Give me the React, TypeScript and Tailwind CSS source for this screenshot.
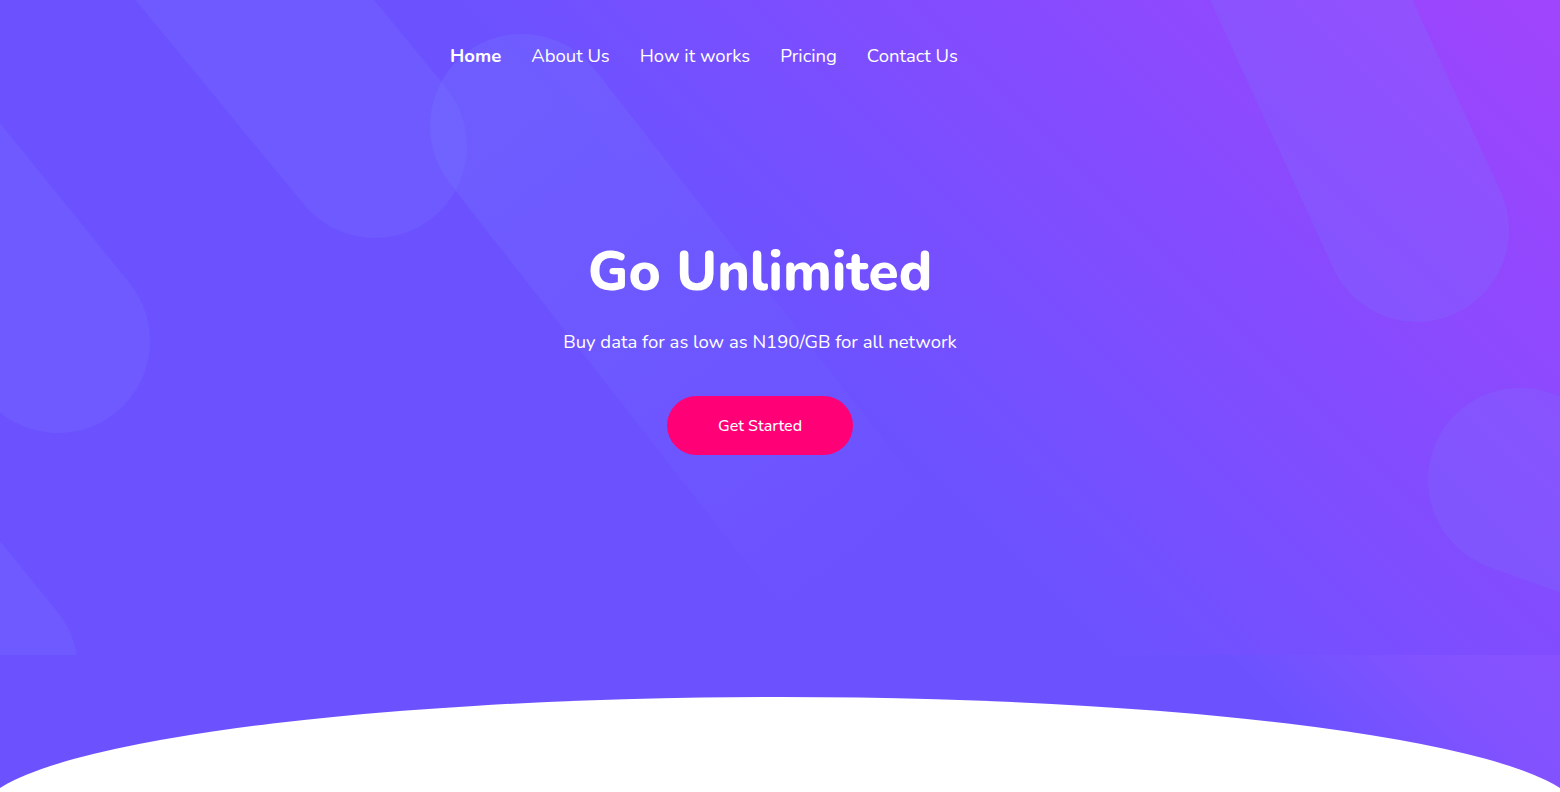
const navLinks = ["Home", "About Us", "How it works", "Pricing", "Contact Us"];

// decorative capsules: [x1, y1, x2, y2] centre line, drawn with a round cap
const capsules = [
  [184, -86, 375, 146],
  [-194, 30, 58, 341],
  [1250, -133, 1417, 230],
  [1520, 480, 1802, 583],
  [-203, 437, -14, 670],
];

const Shapes = () => (
  <svg className="absolute inset-0 h-full w-full" viewBox="0 0 1560 655" preserveAspectRatio="none">
    <defs>
      <linearGradient id="fade" gradientUnits="userSpaceOnUse" x1="522" y1="126" x2="860" y2="560">
        <stop offset="0" stopColor="#767dff" stopOpacity="0.24" />
        <stop offset="0.55" stopColor="#767dff" stopOpacity="0.1" />
        <stop offset="1" stopColor="#767dff" stopOpacity="0" />
      </linearGradient>
    </defs>
    {capsules.map(([x1, y1, x2, y2], i) => (
      <line
        key={i}
        x1={x1}
        y1={y1}
        x2={x2}
        y2={y2}
        stroke="#767dff"
        strokeOpacity={0.2}
        strokeWidth={184}
        strokeLinecap="round"
      />
    ))}
    <line x1={522} y1={126} x2={900} y2={610} stroke="url(#fade)" strokeWidth={184} strokeLinecap="round" />
  </svg>
);

export default function App() {
  return (
    <section
      className="relative h-[792px] overflow-hidden bg-[linear-gradient(45deg,#6c52ff_58%,#8252ff_66%,#a24cff_100%)] text-white"
      style={{ fontFamily: "Nunito, Lato, 'Noto Sans', sans-serif" }}
    >
      <div className="relative h-[655px] overflow-hidden bg-[linear-gradient(45deg,#6c52ff_50%,#a044fd_100%)]">
        <Shapes />

        <nav className="relative flex gap-[30px] pl-[450px] pt-[42px] text-[18.5px] leading-[28px]">
          {navLinks.map((link, i) => (
            <a key={link} href="#" className={i === 0 ? "font-bold" : "font-normal"}>
              {link}
            </a>
          ))}
        </nav>

        <div className="relative flex flex-col items-center pr-[40px] pt-[166px]">
          <h1 className="text-[55px] font-extrabold leading-[72px]">Go Unlimited</h1>
          <p className="mt-[20px] text-[18.5px] leading-[28px]">Buy data for as low as N190/GB for all network</p>
          <button className="mt-[40px] h-[59px] w-[186px] rounded-full bg-[#ff0076] text-[16px] font-medium">
            Get Started
          </button>
        </div>
      </div>

      <div className="absolute left-[-20px] top-[697px] h-[234px] w-[1600px] rounded-[50%] bg-white" />
    </section>
  );
}
